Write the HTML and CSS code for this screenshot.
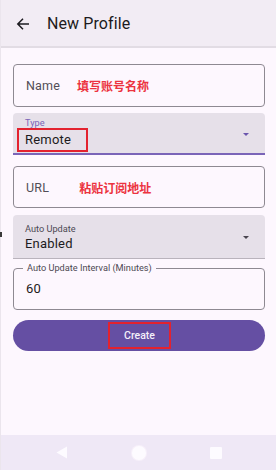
FILE: index.html
```html
<!DOCTYPE html>
<html>
<head>
<meta charset="utf-8">
<link rel="stylesheet" href="styles.css">
</head>
<body>
<div class="screen">
  <header class="appbar">
    <svg class="back" width="14" height="14" viewBox="0 0 14 14"><path d="M13 7H2M7 1.8L1.8 7L7 12.2" fill="none" stroke="#1d1b20" stroke-width="1.5"/></svg>
    <span class="title">New Profile</span>
  </header>
  <main class="content">
    <div class="outlined name-field">
      <span class="placeholder">Name</span>
      <span class="hint hint-name">填写账号名称</span>
    </div>
    <div class="filled type-field">
      <div class="filled-text">
        <span class="small-label purple">Type</span>
        <span class="value"><span class="redbox remote-box">Remote</span></span>
      </div>
      <span class="arrow purple-arrow"></span>
    </div>
    <div class="outlined url-field">
      <span class="placeholder">URL</span>
      <span class="hint hint-url">粘贴订阅地址</span>
    </div>
    <div class="filled auto-field">
      <div class="filled-text">
        <span class="small-label">Auto Update</span>
        <span class="value">Enabled</span>
      </div>
      <span class="arrow"></span>
    </div>
    <div class="outlined interval-field">
      <span class="legend">Auto Update Interval (Minutes)</span>
      <span class="value">60</span>
    </div>
    <button class="create"><span class="redbox create-box">Create</span></button>
  </main>
  <nav class="sysnav">
    <span class="navcell"><svg width="12" height="13" viewBox="0 0 12 13"><path d="M11 0.5V12.5L0.5 6.5Z" fill="#fdfbff"/></svg></span>
    <span class="navcell"><span class="home"></span></span>
    <span class="navcell"><span class="recent"></span></span>
  </nav>
  <span class="edge-mark"></span>
</div>
</body>
</html>
```
FILE: styles.css
```css
* { box-sizing: border-box; }
html, body { margin: 0; padding: 0; }
body {
  font-family: Roboto, "Noto Sans", "Noto Sans CJK SC", sans-serif;
  background: #fdf7fe;
}
.screen {
  position: relative;
  width: 276px;
  height: 470px;
  display: flex;
  flex-direction: column;
  border-left: 1px solid #ebe5ed;
  background: #fdf7fe;
}
.appbar {
  height: 48px;
  flex: none;
  display: flex;
  align-items: center;
  background: #f2ecf4;
  border-bottom: 2px solid #e2dce4;
  padding-left: 15px;
}
.back { display: block; margin-top: 1px; }
.title {
  margin-left: 17px;
  font-size: 16px;
  color: #1d1b20;
  letter-spacing: 0.1px;
}
.content {
  flex: 1;
  display: flex;
  flex-direction: column;
  padding: 16px 11px 0 12px;
}
.outlined {
  position: relative;
  height: 43px;
  border: 1px solid #8e8992;
  border-radius: 4px;
  display: flex;
  align-items: center;
  padding-left: 12px;
}
.placeholder {
  font-size: 12.5px;
  color: #524e57;
  letter-spacing: 0.2px;
}
.hint {
  font-family: "Noto Sans CJK SC", sans-serif;
  font-weight: 700;
  font-size: 12px;
  color: #ec3340;
}
.hint-name { margin-left: 17px; }
.hint-url { margin-left: 30px; }
.filled {
  height: 42px;
  background: #e6e0e9;
  border-radius: 4px 4px 0 0;
  display: flex;
  align-items: center;
  padding: 0 16px 0 12px;
}
.type-field {
  margin-top: 6px;
  border-bottom: 2px solid #7a64b8;
}
.auto-field {
  margin-top: 7px;
  height: 44px;
  border-bottom: 1px solid #b9b3bc;
}
.url-field { margin-top: 11px; height: 42px; }
.interval-field { margin-top: 9px; height: 42px; }
.filled-text {
  flex: 1;
  display: flex;
  flex-direction: column;
}
.small-label {
  font-size: 9.2px;
  color: #4d4953;
  line-height: 11px;
}
.small-label.purple { color: #7a64b8; margin-top: 2px; }
.auto-field .small-label { margin-top: 1px; }
.value {
  font-size: 13px;
  color: #1d1b20;
  line-height: 16px;
  letter-spacing: 0.2px;
}
.type-field .value { margin-top: 0; }
.auto-field .value { margin-top: 2px; }
.redbox {
  display: inline-block;
  border: 2px solid #e3222f;
}
.remote-box {
  margin-left: -8px;
  padding: 2px 15px 2px 6px;
  line-height: 16px;
}
.arrow {
  width: 0;
  height: 0;
  border-left: 3.5px solid transparent;
  border-right: 3.5px solid transparent;
  border-top: 3.5px solid #49454f;
}
.purple-arrow { border-top-color: #6a55ad; margin-top: 2px; }
.auto-field .arrow { margin-top: 2px; }
.legend {
  position: absolute;
  left: 9px;
  top: -7px;
  padding: 0 4px;
  font-size: 9.2px;
  line-height: 12px;
  color: #4d4953;
  background: #fdf7fe;
}
.create {
  margin-top: 10px;
  height: 31px;
  border: none;
  border-radius: 16px;
  background: #654fa3;
  display: flex;
  align-items: center;
  justify-content: center;
  padding: 0;
  font-family: Roboto, sans-serif;
}
.create-box {
  color: #f4f0fa;
  font-size: 10.5px;
  font-weight: 500;
  line-height: 23px;
  padding: 0 14px;
  margin-left: 1px;
}
.sysnav {
  height: 35px;
  flex: none;
  background: #efe8f6;
  display: grid;
  grid-template-columns: 77px 77px 77px;
  justify-content: center;
  align-items: center;
}
.navcell {
  display: flex;
  justify-content: center;
  align-items: center;
}
.navcell svg { display: block; }
.home {
  width: 14px;
  height: 14px;
  border-radius: 50%;
  background: #fdfbff;
  box-shadow: 0 0 0 1px #f7f0fa;
}
.recent {
  width: 12px;
  height: 12px;
  background: #fdfbff;
  border-radius: 1px;
}
.edge-mark {
  position: absolute;
  left: -1px;
  top: 232px;
  width: 2px;
  height: 5px;
  background: #3a3a3a;
}
```
